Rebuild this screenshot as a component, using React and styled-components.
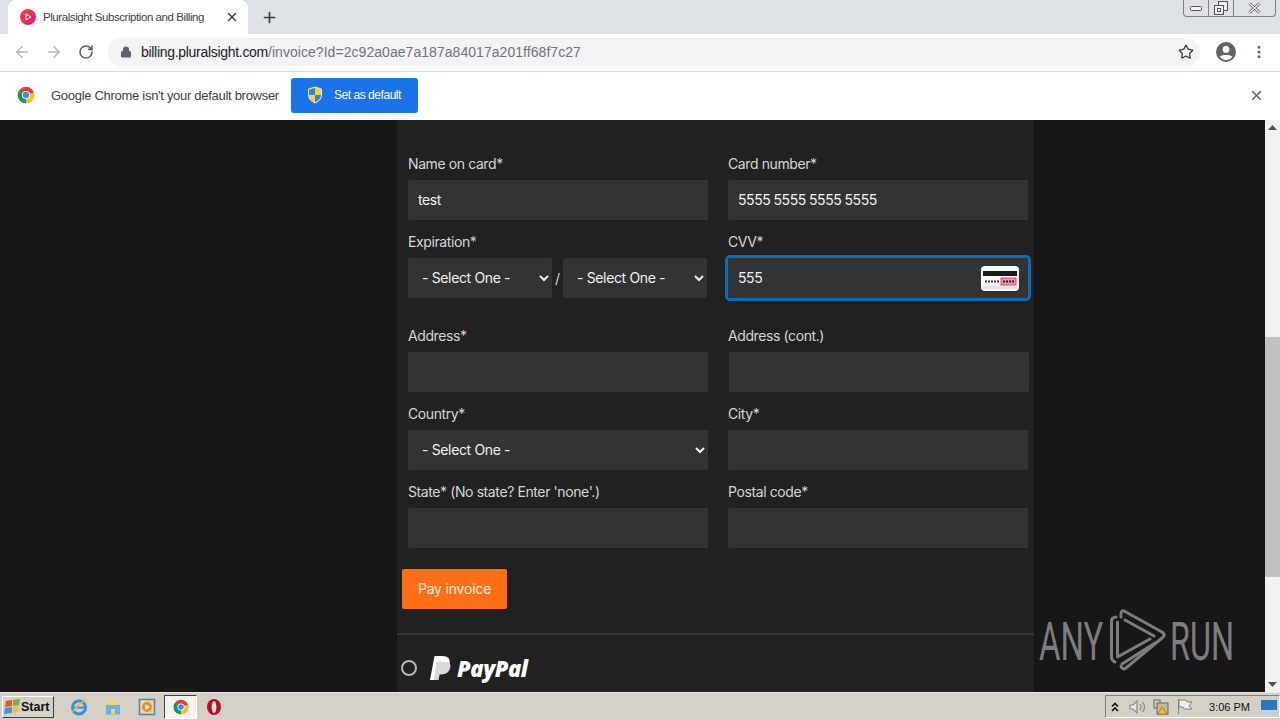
import React from 'react';
import styled, { createGlobalStyle } from 'styled-components';
import { ArrowLeft, ArrowRight, RotateCw, Lock, Star, X, Plus, MoreVertical } from 'lucide-react';

const GlobalStyle = createGlobalStyle`
  html, body { margin: 0; padding: 0; height: 100%; overflow: hidden; }
  * { box-sizing: border-box; }
  body { font-family: "Liberation Sans", Arial, sans-serif; }
`;

const Screen = styled.div`
  width: 1280px;
  height: 720px;
  display: flex;
  flex-direction: column;
  overflow: hidden;
  position: relative;
`;

/* tab strip */
const TabStrip = styled.div`
  height: 34px;
  background: #dee1e6;
  display: flex;
  align-items: flex-end;
  padding-left: 8px;
  flex-shrink: 0;
`;

const Tab = styled.div`
  width: 240px;
  height: 34px;
  background: #fff;
  border-radius: 8px 8px 0 0;
  display: flex;
  align-items: center;
  padding: 0 9px 0 12px;
  color: #3c4043;
  font-size: 11.5px;
`;

const Favicon = styled.span`
  width: 16px;
  height: 16px;
  border-radius: 50%;
  background: linear-gradient(135deg, #f0483c, #e8127c);
  margin-right: 7px;
  display: flex;
  align-items: center;
  justify-content: center;
  flex-shrink: 0;
`;

const TabTitle = styled.span`
  flex: 1;
  white-space: nowrap;
  letter-spacing: -0.43px;
`;

const NewTab = styled.div`
  margin-left: 13px;
  height: 34px;
  display: flex;
  align-items: center;
  color: #3c4043;
`;

const WindowControls = styled.div`
  margin-left: auto;
  margin-right: 4px;
  align-self: flex-start;
  display: flex;
  height: 17px;
  border: 1px solid #7b8089;
  border-top: none;
  border-radius: 0 0 4px 4px;
`;

const WindowButton = styled.div`
  width: ${p => p.$w}px;
  display: flex;
  align-items: center;
  justify-content: center;
  border-left: ${p => (p.$first ? 'none' : '1px solid #7b8089')};
`;

/* toolbar */
const Toolbar = styled.div`
  height: 38px;
  background: #fff;
  border-bottom: 1px solid #dadce0;
  display: flex;
  align-items: center;
  padding: 0 0 2px 13px;
  flex-shrink: 0;
`;

const NavButton = styled.div`
  width: 18px;
  margin-right: ${p => p.$gap}px;
  display: flex;
  justify-content: center;
  color: ${p => p.$color};
`;

const Omnibox = styled.div`
  width: 1092px;
  height: 28px;
  margin-left: 13px;
  border-radius: 14px;
  background: #f1f3f4;
  display: flex;
  align-items: center;
  padding: 0 6px 0 12px;
  color: #5f6368;
`;

const Url = styled.div`
  margin-left: 9px;
  flex: 1;
  font-size: 14px;
  letter-spacing: 0.05px;
  white-space: nowrap;
  color: #70757a;
`;

const UrlHost = styled.span`
  color: #202124;
  letter-spacing: -0.3px;
`;

const ToolbarRight = styled.div`
  display: flex;
  align-items: center;
  margin-left: 16px;
  gap: 15px;
  color: #5f6368;
`;

/* default browser bar */
const InfoBar = styled.div`
  height: 48px;
  background: #fff;
  display: flex;
  align-items: center;
  padding: 0 16px 2px 17px;
  flex-shrink: 0;
`;

const InfoText = styled.span`
  margin-left: 16px;
  font-size: 13px;
  color: #3c4043;
  letter-spacing: -0.29px;
  white-space: nowrap;
`;

const DefaultButton = styled.div`
  margin-left: 12px;
  width: 127px;
  height: 35px;
  border-radius: 3px;
  background: #1a73e8;
  color: #fff;
  font-size: 12px;
  letter-spacing: -0.45px;
  display: flex;
  align-items: center;
  padding-left: 16px;
  gap: 11px;
`;

const InfoClose = styled.div`
  margin-left: auto;
  display: flex;
  color: #5f6368;
`;

/* page */
const Viewport = styled.div`
  height: 572px;
  display: grid;
  grid-template-columns: 1265px 15px;
  flex-shrink: 0;
  overflow: hidden;
`;

const Page = styled.div`
  background: #171717;
  padding-left: 397px;
  overflow: hidden;
  font-family: Inter, "Liberation Sans", sans-serif;
`;

const Panel = styled.div`
  width: 637px;
  height: 572px;
  background: #212121;
  padding-top: 34px;
`;

const FormGrid = styled.form`
  display: grid;
  grid-template-columns: 300px 300px;
  column-gap: 20px;
  padding-left: 11px;
`;

const Field = styled.div`
  margin-bottom: ${p => p.$gap ?? 12}px;
`;

const Label = styled.label`
  display: block;
  height: 20px;
  margin-bottom: 6px;
  color: #d6d6d6;
  font-size: 14px;
  line-height: 20px;
  letter-spacing: -0.4px;
  white-space: nowrap;
`;

const controlStyle = `
  height: 40px;
  background: #333;
  border: none;
  border-radius: 2px;
  color: #f2f2f2;
  font-family: Inter, "Liberation Sans", sans-serif;
  font-size: 14px;
  outline: none;
`;

const TextInput = styled.input`
  ${controlStyle}
  width: 100%;
  padding: 0 10px 2px;
  margin-left: ${p => p.$shift ?? 0}px;
  display: block;
  letter-spacing: -0.4px;
  word-spacing: -0.5px;
`;

const Select = styled.select`
  ${controlStyle}
  width: ${p => p.$w || '100%'};
  padding: 0 0 2px 10px;
  display: block;
  letter-spacing: -0.35px;
`;

const ExpiryRow = styled.div`
  display: flex;
  align-items: center;
`;

const Slash = styled.span`
  width: 11px;
  text-align: center;
  color: #d6d6d6;
  font-size: 14px;
`;

const CvvWrap = styled.div`
  position: relative;
  height: 40px;
  border-radius: 2px;
  box-shadow: 0 0 0 3px #0f6cb0;
`;

const CardBadge = styled.svg`
  position: absolute;
  right: 9px;
  top: 8px;
`;

const PayButton = styled.button`
  display: block;
  margin: 21px 0 24px 5px;
  width: 105px;
  height: 40px;
  padding: 0 0 2px;
  border: none;
  border-radius: 2px;
  background: #ff6d14;
  color: #fff3e8;
  font-family: Inter, "Liberation Sans", sans-serif;
  font-size: 14px;
  letter-spacing: -0.2px;
`;

const Divider = styled.div`
  height: 2px;
  background: #333;
`;

const PayPalRow = styled.div`
  display: flex;
  align-items: center;
  padding: 18px 0 0 4px;
`;

const Radio = styled.span`
  width: 16px;
  height: 16px;
  border-radius: 50%;
  border: 2px solid #b5b5b5;
  margin-right: 12px;
`;

const PayPalWord = styled.span`
  margin-left: 6px;
  color: #fff;
  font-family: "Open Sans", "Liberation Sans", sans-serif;
  font-style: italic;
  font-weight: 800;
  font-size: 22px;
  letter-spacing: -0.45px;
`;

/* scrollbar */
const Scrollbar = styled.div`
  background: #f1f1f1;
  display: flex;
  flex-direction: column;
  justify-content: space-between;
  align-items: stretch;
  position: relative;
`;

const ScrollArrow = styled.div`
  height: 15px;
  display: flex;
  align-items: center;
  justify-content: center;
`;

const ScrollThumb = styled.div`
  position: absolute;
  left: 0;
  right: 0;
  top: 217px;
  height: 240px;
  background: #c1c1c1;
`;

/* watermark */
const Watermark = styled.div`
  position: absolute;
  left: 1039px;
  top: 609px;
  width: 195px;
  height: 64px;
  display: flex;
  align-items: center;
  color: #7d7d7d;
  pointer-events: none;
`;

const MarkWord = styled.span`
  display: inline-block;
  width: ${p => p.$w}px;
  font-family: Roboto, "Liberation Sans", sans-serif;
  font-weight: 400;
  font-size: 53px;
  line-height: 64px;
  padding-top: 2px;
  transform: scaleX(${p => p.$sx});
  transform-origin: left center;
  white-space: nowrap;
`;

/* taskbar */
const Taskbar = styled.div`
  height: 28px;
  background: #d4d0c8;
  border-top: 1px solid #e8e6e0;
  display: flex;
  align-items: center;
  padding-left: 2px;
  flex-shrink: 0;
`;

const StartButton = styled.div`
  width: 52px;
  height: 22px;
  display: flex;
  align-items: center;
  gap: 0;
  padding-left: 1px;
  font-family: "Liberation Sans", sans-serif;
  font-weight: 700;
  font-size: 12.5px;
  color: #111;
  background: #d4d0c8;
  border: 1px solid;
  border-color: #fff #404040 #404040 #fff;
`;

const QuickLaunch = styled.div`
  display: flex;
  align-items: center;
  margin-left: 8px;
`;

const TaskIcon = styled.div`
  width: ${p => p.$w || 34}px;
  height: 24px;
  display: flex;
  align-items: center;
  justify-content: center;
  ${p => p.$active && `
    background: #f4f3ef;
    border: 1px solid;
    border-color: #404040 #fff #fff #404040;
  `}
`;

const Tray = styled.div`
  margin-left: auto;
  width: 175px;
  height: 23px;
  display: flex;
  align-items: center;
  border: 1px solid;
  border-color: #808080 #fff #fff #808080;
  padding-left: 3px;
  color: #222;
`;

const TrayIcons = styled.div`
  display: flex;
  align-items: center;
  gap: 7px;
`;

const Clock = styled.span`
  margin-left: 16px;
  font-family: "Liberation Sans", sans-serif;
  font-size: 11px;
  color: #111;
  white-space: nowrap;
`;

const MonitorIcon = styled.svg`
  margin-left: 11px;
`;

const ChromeLogo = ({ size = 18 }) => (
  <svg width={size} height={size} viewBox="0 0 24 24">
    <circle cx="12" cy="12" r="11" fill="#db4437" />
    <path d="M12 12 L22.5 8.5 A11 11 0 0 1 12 23 Z" fill="#fbc02d" />
    <path d="M12 12 L12 23 A11 11 0 0 1 2.5 6.5 Z" fill="#0f9d58" />
    <circle cx="12" cy="12" r="5.4" fill="#fff" />
    <circle cx="12" cy="12" r="4.2" fill="#4285f4" />
  </svg>
);

const ShieldIcon = () => (
  <svg width="16" height="18" viewBox="0 0 16 18">
    <path d="M8 1 L14.5 3 V9 C14.5 13 11.5 15.5 8 17 C4.5 15.5 1.5 13 1.5 9 V3 Z" fill="#f6d23c" stroke="#dfe7f5" strokeWidth="1" />
    <path d="M8 2 V9 H2 V3.4 Z" fill="#3f7fd0" />
    <path d="M8 9 H14 C13.8 12.6 11 15 8 16 Z" fill="#3f7fd0" />
  </svg>
);

const AccountIcon = () => (
  <svg width="20" height="20" viewBox="0 0 20 20">
    <circle cx="10" cy="10" r="10" fill="#5f6368" />
    <circle cx="10" cy="7.4" r="3.4" fill="#fff" />
    <path d="M3.6 14.8 C5.2 12.4 14.8 12.4 16.4 14.8 C14.6 17 12.4 18 10 18 C7.6 18 5.4 17 3.6 14.8 Z" fill="#fff" />
  </svg>
);

const CvvCard = () => (
  <CardBadge width="38" height="25" viewBox="0 0 38 25">
    <rect width="38" height="25" rx="4" fill="#f7f8fb" />
    <rect x="2" y="5" width="34" height="5" fill="#1a1a1a" />
    <rect x="20" y="12" width="15" height="7" fill="#f39aa8" stroke="#d4213d" strokeWidth="0.8" />
    <path d="M4 15.5 H18" stroke="#333" strokeWidth="2" strokeDasharray="2 1" />
    <path d="M22 15.5 H33" stroke="#222" strokeWidth="2" strokeDasharray="2 1" />
    <rect x="2" y="20" width="34" height="3" fill="#dce6f6" />
  </CardBadge>
);

const PayPalMark = () => (
  <svg width="22" height="25" viewBox="0 0 22 25">
    <path d="M5.5 0 H13.5 C19 0 21.5 3 20.6 7.4 C19.6 12.4 16 14.6 11.4 14.6 H8.6 L7 24 H1 Z" fill="#fff" />
    <path d="M7.5 6 H18 C21.5 7 22 9.5 21.2 12 C20 16.6 16.4 18.4 12.4 18.4 H10.6 L9.6 24 H5 Z" fill="#d9d9d9" />
  </svg>
);

const RunLogo = () => (
  <svg width="60" height="64" viewBox="0 0 60 64" fill="none" stroke="#7d7d7d" strokeWidth="3" strokeLinejoin="round" strokeLinecap="round">
    <path d="M6 8 C3 8 1.5 10 1.5 12 V48 C1.5 50 3 52 5 53" />
    <path d="M11 8 V5 C11 2 13 1 15 2.5 L52 23 C55 25 55 27 52 29 L16 59 C14 61 11 59 11 57" />
    <path d="M7.5 13 V48 L40 30" />
    <path d="M15 11 L44 27" />
    <path d="M12 55 L45 34" />
  </svg>
);

const IeIcon = () => (
  <svg width="18" height="18" viewBox="0 0 18 18">
    <circle cx="9" cy="9.5" r="6.5" fill="none" stroke="#3d8fd6" strokeWidth="3" />
    <rect x="4" y="8.6" width="10" height="2" fill="#3d8fd6" />
    <path d="M2 15 C5 10 11 4 16 2" fill="none" stroke="#e5b93c" strokeWidth="1.4" />
  </svg>
);

const FolderIcon = () => (
  <svg width="18" height="18" viewBox="0 0 18 18">
    <path d="M3 1.5 H9 L10.5 3.5 H15 V15 H3 Z" fill="#ecd27c" />
    <rect x="2" y="7" width="14" height="9.5" fill="#6fb1d8" />
    <rect x="7" y="11" width="4" height="5.5" fill="#ecd27c" />
  </svg>
);

const MediaIcon = () => (
  <svg width="18" height="18" viewBox="0 0 18 18">
    <rect x="1.5" y="1.5" width="15" height="15" fill="#f8d59c" stroke="#4d86b8" strokeWidth="1.6" />
    <circle cx="9" cy="9" r="5" fill="#ed8c1f" />
    <path d="M7.4 6.2 L12 9 L7.4 11.8 Z" fill="#fff" />
  </svg>
);

const OperaIcon = () => (
  <svg width="16" height="18" viewBox="0 0 16 18">
    <ellipse cx="8" cy="9" rx="7" ry="8" fill="#b5101c" />
    <ellipse cx="8" cy="9" rx="2.4" ry="6" fill="#f4dede" />
  </svg>
);

const WindowsFlag = () => (
  <svg width="17" height="15" viewBox="0 0 17 15">
    <path d="M2 2 L8 1 V7 L1 8 Z" fill="#e2592b" />
    <path d="M9 1 L16 0 L15 6 L9 7 Z" fill="#76b043" />
    <path d="M1 9 L8 8 V14 L0 15 Z" fill="#4a8fd8" />
    <path d="M9 8 L15 7 L14 13 L9 14 Z" fill="#f2c230" />
  </svg>
);

const TrayGlyphs = () => (
  <TrayIcons>
    <svg width="12" height="12" viewBox="0 0 12 12" fill="none" stroke="#111" strokeWidth="1.6">
      <path d="M3 5.5 L6 2.5 L9 5.5 M3 10 L6 7 L9 10" />
    </svg>
    <svg width="18" height="16" viewBox="0 0 18 16" fill="none" stroke="#8a8a8a" strokeWidth="1.2">
      <path d="M2 6 H5 L9 2 V14 L5 10 H2 Z" fill="#e8e8e8" />
      <path d="M12 5 C13.5 7 13.5 9 12 11 M14.5 3 C17 6 17 10 14.5 13" />
    </svg>
    <svg width="16" height="17" viewBox="0 0 16 17">
      <rect x="1" y="2" width="6" height="8" fill="none" stroke="#666" />
      <rect x="4" y="5" width="11" height="11" fill="#c9b98a" stroke="#666" />
      <path d="M9 9 L14 16 H5 Z" fill="#f0c419" stroke="#8a6d00" strokeWidth="0.6" />
    </svg>
    <svg width="17" height="17" viewBox="0 0 17 17" fill="#efefef" stroke="#808080">
      <path d="M2.5 1 V16" fill="none" />
      <path d="M3 2 H10 L11 4 H16 L13 8 L16 11 H8 L7 9 H3 Z" />
    </svg>
  </TrayIcons>
);

const InputField = ({ label, value, gap, shift }) => (
  <Field $gap={gap}>
    <Label>{label}</Label>
    <TextInput defaultValue={value} $shift={shift} readOnly />
  </Field>
);

const SelectOne = ({ w }) => (
  <Select $w={w} defaultValue="">
    <option value="">- Select One -</option>
  </Select>
);

export default function App() {
  return (
    <>
      <GlobalStyle />
      <Screen>
        <TabStrip>
          <Tab>
            <Favicon>
              <svg width="8" height="8" viewBox="0 0 8 8">
                <path d="M2 1 L7 4 L2 7 Z" fill="none" stroke="#fff" strokeWidth="1" />
              </svg>
            </Favicon>
            <TabTitle>Pluralsight Subscription and Billing</TabTitle>
            <X size={14} strokeWidth={2.4} color="#3c4043" />
          </Tab>
          <NewTab><Plus size={17} strokeWidth={2.4} /></NewTab>
          <WindowControls>
            <WindowButton $w={24} $first>
              <svg width="12" height="5" viewBox="0 0 12 5"><rect x="0.5" y="0.5" width="11" height="4" rx="1" fill="#f3f4f6" stroke="#555" /></svg>
            </WindowButton>
            <WindowButton $w={25}>
              <svg width="14" height="14" viewBox="0 0 14 14" fill="#eef0f3" stroke="#555"><rect x="4.5" y="0.5" width="9" height="9" /><rect x="0.5" y="4.5" width="9" height="9" /><rect x="3.5" y="7.5" width="3" height="3" /></svg>
            </WindowButton>
            <WindowButton $w={42}>
              <svg width="13" height="12" viewBox="0 0 13 12"><path d="M1.5 1.5 L11.5 10.5 M11.5 1.5 L1.5 10.5" stroke="#555" strokeWidth="3" /><path d="M1.5 1.5 L11.5 10.5 M11.5 1.5 L1.5 10.5" stroke="#f3f4f6" strokeWidth="1.4" /></svg>
            </WindowButton>
          </WindowControls>
        </TabStrip>

        <Toolbar>
          <NavButton $gap={14} $color="#b4b7bb"><ArrowLeft size={18} /></NavButton>
          <NavButton $gap={14} $color="#b4b7bb"><ArrowRight size={18} /></NavButton>
          <NavButton $gap={0} $color="#5f6368"><RotateCw size={16} strokeWidth={2.4} /></NavButton>
          <Omnibox>
            <Lock size={12} fill="#5f6368" strokeWidth={2.2} />
            <Url><UrlHost>billing.pluralsight.com</UrlHost>/invoice?Id=2c92a0ae7a187a84017a201ff68f7c27</Url>
            <Star size={16} strokeWidth={2} color="#3c4043" />
          </Omnibox>
          <ToolbarRight>
            <AccountIcon />
            <MoreVertical size={16} strokeWidth={2.6} />
          </ToolbarRight>
        </Toolbar>

        <InfoBar>
          <ChromeLogo />
          <InfoText>Google Chrome isn't your default browser</InfoText>
          <DefaultButton><ShieldIcon />Set as default</DefaultButton>
          <InfoClose><X size={15} strokeWidth={2.6} /></InfoClose>
        </InfoBar>

        <Viewport>
          <Page>
            <Panel>
              <FormGrid>
                <InputField label="Name on card*" value="test" />
                <InputField label="Card number*" value="5555 5555 5555 5555" />
                <Field $gap={28}>
                  <Label>Expiration*</Label>
                  <ExpiryRow>
                    <SelectOne w="144px" />
                    <Slash>/</Slash>
                    <SelectOne w="144px" />
                  </ExpiryRow>
                </Field>
                <Field $gap={28}>
                  <Label>CVV*</Label>
                  <CvvWrap>
                    <TextInput defaultValue="555" readOnly />
                    <CvvCard />
                  </CvvWrap>
                </Field>
                <InputField label="Address*" value="" />
                <InputField label="Address (cont.)" value="" shift={1} />
                <Field>
                  <Label>Country*</Label>
                  <SelectOne />
                </Field>
                <InputField label="City*" value="" />
                <InputField label="State* (No state? Enter 'none'.)" value="" gap={0} />
                <InputField label="Postal code*" value="" gap={0} />
              </FormGrid>
              <PayButton type="button">Pay invoice</PayButton>
              <Divider />
              <PayPalRow>
                <Radio />
                <PayPalMark />
                <PayPalWord>PayPal</PayPalWord>
              </PayPalRow>
            </Panel>
          </Page>
          <Scrollbar>
            <ScrollArrow>
              <svg width="9" height="5" viewBox="0 0 9 5"><path d="M0 5 L4.5 0 L9 5 Z" fill="#505050" /></svg>
            </ScrollArrow>
            <ScrollThumb />
            <ScrollArrow>
              <svg width="9" height="5" viewBox="0 0 9 5"><path d="M0 0 L4.5 5 L9 0 Z" fill="#505050" /></svg>
            </ScrollArrow>
          </Scrollbar>
        </Viewport>

        <Taskbar>
          <StartButton><WindowsFlag />Start</StartButton>
          <QuickLaunch>
            <TaskIcon><IeIcon /></TaskIcon>
            <TaskIcon><FolderIcon /></TaskIcon>
            <TaskIcon><MediaIcon /></TaskIcon>
            <TaskIcon $active $w={33}><ChromeLogo size={16} /></TaskIcon>
            <TaskIcon><OperaIcon /></TaskIcon>
          </QuickLaunch>
          <Tray>
            <TrayGlyphs />
            <Clock>3:06 PM</Clock>
            <MonitorIcon width="16" height="14" viewBox="0 0 16 14">
              <rect width="16" height="14" fill="#2f76b8" />
              <rect y="10" width="16" height="4" fill="#bcd2e6" />
            </MonitorIcon>
          </Tray>
        </Taskbar>

        <Watermark>
          <MarkWord $w={71} $sx={0.62}>ANY</MarkWord>
          <RunLogo />
          <MarkWord $w={61} $sx={0.61}>RUN</MarkWord>
        </Watermark>
      </Screen>
    </>
  );
}
